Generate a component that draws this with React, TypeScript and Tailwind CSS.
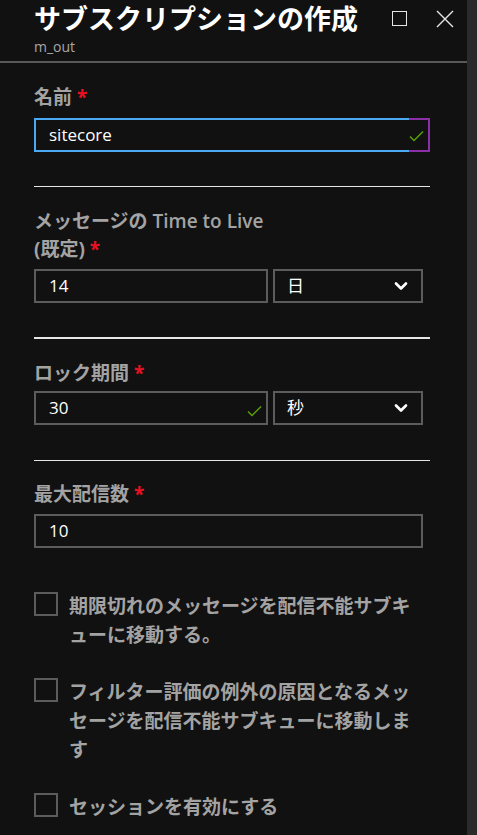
import { ChevronDown } from 'lucide-react';

const font = "font-['Open_Sans','Noto_Sans_CJK_JP',sans-serif]";

function Check({ className }: { className: string }) {
  return (
    <svg className={className} width="15" height="12" viewBox="0 0 15 12" fill="none">
      <path d="M1 6.5 L5 10.5 L14 1.5" stroke="#5aa300" strokeWidth="1.4" />
    </svg>
  );
}

function Label({ text }: { text: string }) {
  return (
    <div className="text-[19px] leading-[28px] font-bold text-[#a3a3a3]">
      {text} <span className="text-[#e81123]">*</span>
    </div>
  );
}

function Select({ value }: { value: string }) {
  return (
    <div className="relative flex h-[34px] w-[150px] items-center justify-between border-2 border-[#5c5c5c] pl-[12px] pr-[10px] text-[17px] text-white">
      <span>{value}</span>
      <ChevronDown size={20} strokeWidth={3.2} className="text-white" />
    </div>
  );
}

function Checkbox({ text }: { text: string }) {
  return (
    <div className="flex gap-[11px]">
      <div className="h-[24px] w-[24px] shrink-0 border-2 border-[#5c5c5c]" />
      <div className="w-[356px] text-[19px] leading-[29px] font-bold text-[#a3a3a3] [line-break:anywhere]">{text}</div>
    </div>
  );
}

export default function App() {
  return (
    <div className={`flex h-[835px] w-[477px] overflow-hidden bg-[#111111] ${font}`}>
      <div className="w-[467px]">
        <div className="relative h-[63px] border-b-2 border-[#595959] px-[34px]">
          <div className="pt-[2px] text-[27px] leading-[34px] font-bold text-white">サブスクリプションの作成</div>
          <div className="mt-[3px] text-[14px] leading-[16px] text-[#a8a8a8]">m_out</div>
          <div className="absolute left-[392px] top-[11px] h-[15px] w-[15px] border-[1.5px] border-[#e6e6e6]" />
          <svg className="absolute left-[436px] top-[10px]" width="18" height="18" viewBox="0 0 18 18">
            <path d="M1 1 L17 17 M17 1 L1 17" stroke="#e6e6e6" strokeWidth="1.4" />
          </svg>
        </div>

        <div className="px-[34px]">
          <div className="mt-[20px]">
            <Label text="名前" />
          </div>
          <div className="relative mt-[7px] flex h-[34px] w-[396px]">
            <div className="flex flex-1 items-center border-y-2 border-l-2 border-[#4ba8f2] pl-[13px] text-[17px] text-white">
              sitecore
            </div>
            <div className="w-[21px] border-y-2 border-r-2 border-[#8b2fa6]" />
            <Check className="absolute left-[375px] top-[12px]" />
          </div>

          <div className="mt-[34px] h-px w-[396px] bg-[#e6e6e6]" />

          <div className="mt-[20px]">
            <div className="text-[19px] leading-[28px] font-semibold text-[#a3a3a3]">メッセージの Time to Live</div>
            <Label text="(既定)" />
          </div>
          <div className="mt-[6px] flex gap-[5px]">
            <div className="flex h-[34px] w-[234px] items-center border-2 border-[#5c5c5c] pl-[13px] text-[17px] text-white">14</div>
            <Select value="日" />
          </div>

          <div className="mt-[34px] h-[2px] w-[396px] bg-[#e6e6e6]" />

          <div className="mt-[20px]">
            <Label text="ロック期間" />
          </div>
          <div className="mt-[4px] flex gap-[5px]">
            <div className="relative flex h-[34px] w-[234px] items-center border-2 border-[#5c5c5c] pl-[13px] text-[17px] text-white">
              30
              <Check className="absolute left-[211px] top-[12px]" />
            </div>
            <Select value="秒" />
          </div>

          <div className="mt-[35px] h-px w-[396px] bg-[#e6e6e6]" />

          <div className="mt-[19px]">
            <Label text="最大配信数" />
          </div>
          <div className="mt-[6px] flex h-[34px] w-[389px] items-center border-2 border-[#5c5c5c] pl-[13px] text-[17px] text-white">10</div>

          <div className="mt-[44px]">
            <Checkbox text="期限切れのメッセージを配信不能サブキューに移動する。" />
          </div>
          <div className="mt-[28px]">
            <Checkbox text="フィルター評価の例外の原因となるメッセージを配信不能サブキューに移動します" />
          </div>
          <div className="mt-[28px]">
            <Checkbox text="セッションを有効にする" />
          </div>
        </div>
      </div>
      <div className="w-[10px] bg-[#2b2b2b]" />
    </div>
  );
}
